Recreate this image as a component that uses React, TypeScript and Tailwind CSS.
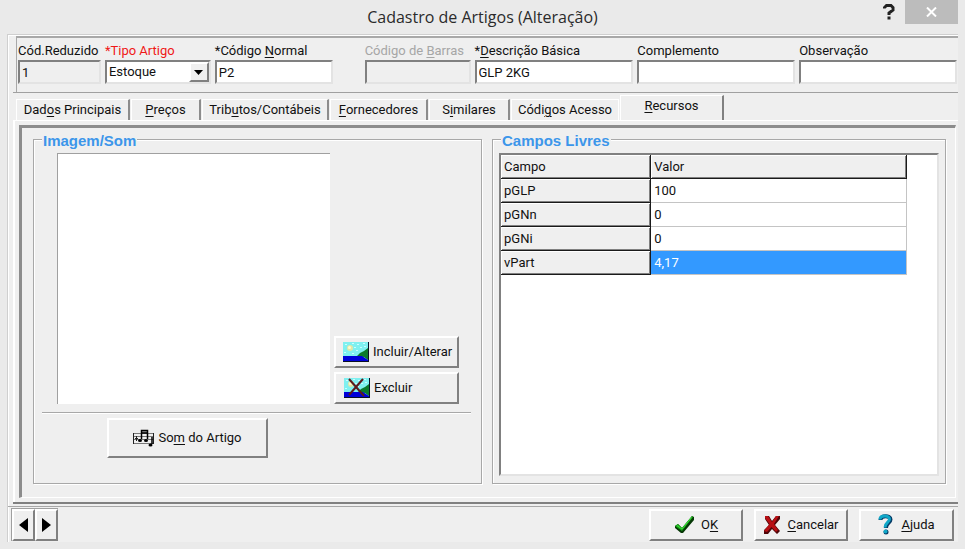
import { useState, type ReactNode } from "react"
import clsx from "clsx"

const FIELDS = [
    { id: "reduzido", label: "Cód.Reduzido", value: "1", size: "flex-[83]", readOnly: true },
    { id: "tipo", label: "*Tipo Artigo", value: "Estoque", size: "flex-[106]", select: true },
    { id: "normal", label: "*Código &Normal", value: "P2", size: "flex-[118]" },
    { id: "barras", label: "Código de &Barras", value: "", size: "flex-[106] ml-7", disabled: true },
    { id: "descricao", label: "*&Descrição Básica", value: "GLP 2KG", size: "flex-[159]" },
    { id: "complemento", label: "Complemento", value: "", size: "flex-[158]" },
    { id: "observacao", label: "Observação", value: "", size: "flex-[158]" },
]

const TABS = [
    { id: "dados", label: "Dad&os Principais", width: "min-w-[114px]" },
    { id: "precos", label: "&Preços", width: "min-w-[70px]" },
    { id: "tributos", label: "Trib&utos/Contábeis", width: "min-w-[127px]" },
    { id: "fornecedores", label: "&Fornecedores", width: "min-w-[98px]" },
    { id: "similares", label: "S&imilares", width: "min-w-[81px]" },
    { id: "codigos", label: "Códi&gos Acesso", width: "min-w-[108px]" },
    { id: "recursos", label: "&Recursos", width: "min-w-[104px]" },
]

const CAMPOS = [
    { campo: "pGLP", valor: "100" },
    { campo: "pGNn", valor: "0" },
    { campo: "pGNi", valor: "0" },
    { campo: "vPart", valor: "4,17" },
]

// "&" marks the access key, which is underlined
function Caption({ text }: { text: string }) {
    const at = text.indexOf("&")
    if (at < 0) return <span>{text}</span>
    return (
        <span className="whitespace-pre">
            {text.slice(0, at)}
            <u className="underline-offset-2">{text[at + 1]}</u>
            {text.slice(at + 2)}
        </span>
    )
}

function RaisedButton({ children, className, label }: { children: ReactNode; className?: string; label?: string }) {
    return (
        <button
            type="button"
            aria-label={label}
            className={clsx(
                "flex items-center border-2 border-t-white border-l-white border-r-[#808080] border-b-[#808080] bg-[#efefef] whitespace-nowrap active:border-t-[#808080] active:border-l-[#808080] active:border-r-white active:border-b-white",
                className
            )}
        >
            {children}
        </button>
    )
}

function PictureIcon({ crossed }: { crossed?: boolean }) {
    return (
        <svg width="26" height="20" viewBox="0 0 26 20" className="shrink-0">
            <rect width="26" height="20" fill="#0a1024" />
            <rect width="25" height="19" fill="#7ff0f0" />
            <path d="M2 2.500h2M9 1.500h2M14 2.500h2M20 1.500h2M1 10.500h2M9 11.500h2M13 8.500h2M17 5.500h2M11 5.500h2M21 4.500h2" stroke="#c8ffff" />
            <circle cx="7" cy="6" r="3" fill="#e0e8a8" />
            <circle cx="6.500" cy="5.500" r="1.500" fill="#fffbd0" />
            <path d="M14 14 L17 11 L21 9 L25 6 V18 L21 15 Z" fill="#0b7a2c" />
            <path d="M0 14 H19 L25 18 V19 H0 Z" fill="#0000d8" />
            {crossed && <path d="M5 1 L20 18 M19 1 L5 17" stroke="#5c1a1c" strokeWidth="2" />}
        </svg>
    )
}

function MusicIcon() {
    return (
        <svg width="21" height="18" viewBox="0 0 21 18" className="shrink-0">
            <path d="M0 4.500H20M0 7.500H20M0 10.500H20M0 14.500H20" stroke="#777" />
            <path d="M.5 4V15M20.500 4V15" stroke="#222" />
            <path d="M3.500 7V12M2 9.500H5" stroke="#222" />
            <path d="M8 1H15V4H8Z" fill="#999" />
            <path d="M8.500 10V1.500H14.500V10M8.500 4H14.500M19 8V15" fill="none" stroke="#000" strokeWidth="1.500" />
            <ellipse cx="7" cy="11.500" rx="2" ry="1.500" />
            <ellipse cx="13" cy="11.500" rx="2" ry="1.500" />
            <ellipse cx="17.500" cy="16" rx="2" ry="1.500" />
        </svg>
    )
}

function CheckIcon() {
    return (
        <svg width="21" height="20" viewBox="0 0 21 20" className="shrink-0">
            <path d="M1 11 L4 9 L8 13 L18 1 L20 2 V5 L9 18 H7 L1 13 Z" fill="#063806" />
            <path d="M1 11 L4 9 L8 13 L18 1 L19 2 L8 16 Z" fill="#18a818" />
            <path d="M3 10.500 L8 14 L17.500 2.500" fill="none" stroke="#3ce03c" />
        </svg>
    )
}

function CrossIcon() {
    return (
        <svg width="18" height="19" viewBox="0 0 18 19" className="shrink-0">
            <path d="M2 1 H6 L9 6 L13 1 H17 V4 L12 10 L17 16 L14 19 L9 14 L5 19 H1 V15 L6 10 L2 4 Z" fill="#4d0508" />
            <path d="M2 1 H5 L9 7 L13 1 H16 L11 9 L15 15 L13 17 L8.500 12 L4 17 L1 16 L6.500 9 L2 3 Z" fill="#b80f14" />
        </svg>
    )
}

function HelpIcon() {
    return (
        <svg width="15" height="21" viewBox="0 0 15 21" className="shrink-0">
            <path d="M2.500 6 C2.500 1 12.500 1 12.500 5.500 C12.500 9 8 9 8 14" fill="none" stroke="#063a66" strokeWidth="4" />
            <path d="M2 5.500 C2 1 11.500 1 11.500 5 C11.500 8.500 7 8.500 7 13.500" fill="none" stroke="#10a8c8" strokeWidth="3" />
            <circle cx="8" cy="18" r="2.500" fill="#063a66" />
            <circle cx="7.500" cy="17.500" r="2" fill="#10a8c8" />
        </svg>
    )
}

function TitleBar() {
    return (
        <header className="grid h-[34px] grid-cols-[1fr_auto_1fr] items-start pr-[7px] pl-[7px]">
            <h1 className="col-start-2 font-['Open_Sans',sans-serif] text-base leading-[34px] text-[#2b2b2b]">
                Cadastro de Artigos (Alteração)
            </h1>
            <div className="flex justify-end gap-1">
                <button type="button" aria-label="Ajuda da janela" className="flex h-6 w-6 items-center justify-center">
                    <svg width="12" height="16" viewBox="0 0 12 16">
                        <path d="M1.500 4.500 V3.500 L3.500 1.500 H8 L10 3.500 V6 L6 9 V11" fill="none" stroke="#222" strokeWidth="3" />
                        <rect x="4.500" y="12.500" width="3" height="3" fill="#222" />
                    </svg>
                </button>
                <button type="button" aria-label="Fechar" className="flex h-6 w-[53px] items-center justify-center bg-[#bcbcbc]">
                    <svg width="11" height="10" viewBox="0 0 11 10">
                        <path d="M1 .5 L10 9.500 M10 .5 L1 9.500" stroke="#fff" strokeWidth="2" />
                    </svg>
                </button>
            </div>
        </header>
    )
}

function FieldRow() {
    return (
        <section className="ml-2 flex gap-1 border-t-2 border-l border-[#a8a8a8] pt-1 pr-px pb-2 pl-px">
            {FIELDS.map((f) => (
                <div key={f.id} className={clsx("flex min-w-0 flex-col", f.size)}>
                    <label
                        htmlFor={f.id}
                        className={clsx(
                            "leading-[18px] whitespace-nowrap",
                            f.select && "text-[#f01818]",
                            f.disabled && "text-[#a6a6a6]"
                        )}
                    >
                        <Caption text={f.label} />
                    </label>
                    {f.select ? (
                        <div className="relative">
                            <select
                                id={f.id}
                                defaultValue={f.value}
                                className="h-6 w-full appearance-none border-2 border-t-[#808080] border-r-[#e3e3e3] border-b-[#e3e3e3] border-l-[#808080] bg-white pl-[2px]"
                            >
                                <option>Estoque</option>
                                <option>Serviço</option>
                            </select>
                            <span className="pointer-events-none absolute top-[2px] right-[2px] flex h-5 w-5 items-center justify-center border-2 border-t-white border-r-[#808080] border-b-[#808080] border-l-white bg-[#efefef]">
                                <svg width="9" height="5" viewBox="0 0 9 5" className="shrink-0">
                                    <path d="M0 0H9L4.500 5Z" />
                                </svg>
                            </span>
                        </div>
                    ) : (
                        <input
                            id={f.id}
                            type="text"
                            defaultValue={f.value}
                            readOnly={f.readOnly}
                            disabled={f.disabled}
                            className={clsx(
                                "h-6 w-full border-2 border-t-[#808080] border-r-[#e3e3e3] border-b-[#e3e3e3] border-l-[#808080] pl-[2px] outline-none",
                                f.readOnly || f.disabled ? "bg-[#efefef]" : "bg-white"
                            )}
                        />
                    )}
                </div>
            ))}
        </section>
    )
}

function GroupBox({ title, className, children }: { title: string; className?: string; children: ReactNode }) {
    return (
        <fieldset
            className={clsx(
                "flex min-w-0 flex-col border border-[#a8a8a8] shadow-[1px_1px_0_#fff,inset_1px_1px_0_#fff]",
                className
            )}
        >
            <legend className="ml-2 bg-[#efefef] px-px pt-1 font-['Liberation_Sans',sans-serif] text-[15px] leading-4 font-bold text-[#3c96ea]">
                {title}
            </legend>
            {children}
        </fieldset>
    )
}

function ImagemSom() {
    return (
        <GroupBox title="Imagem/Som" className="flex-[449]">
            <div className="mt-1 flex flex-1 items-end gap-1 pr-[22px] pl-[23px]">
                <div className="flex-1 self-stretch border-t border-l border-[#a0a0a0] bg-white" />
                <div className="flex w-[125px] flex-col gap-1">
                    <RaisedButton className="h-8 gap-1 pl-[7px]">
                        <PictureIcon />
                        Incluir/Alterar
                    </RaisedButton>
                    <RaisedButton className="h-8 gap-1 pl-2">
                        <PictureIcon crossed />
                        Excluir
                    </RaisedButton>
                </div>
            </div>
            <hr className="mt-2 mr-[10px] ml-2 border-t border-b border-t-[#a8a8a8] border-b-white" />
            <RaisedButton className="mt-1 mb-[25px] ml-[73px] h-10 w-[161px] justify-center gap-1">
                <MusicIcon />
                <Caption text="So&m do Artigo" />
            </RaisedButton>
        </GroupBox>
    )
}

function CamposLivres() {
    const [selected, setSelected] = useState("vPart")
    const head = "h-6 border-r border-b border-[#1a1a1a] bg-[#efefef] px-[3px] text-left font-normal shadow-[inset_1px_1px_0_#fff,inset_-1px_-1px_0_#808080]"

    return (
        <GroupBox title="Campos Livres" className="flex-[454]">
            <div className="mx-[6px] mt-1 mb-[7px] flex-1 border-2 border-t-[#808080] border-r-[#e3e3e3] border-b-[#e3e3e3] border-l-[#808080] bg-white pr-[30px]">
                <table className="w-full table-fixed border-separate border-spacing-0">
                    <thead>
                        <tr>
                            <th scope="col" className={clsx(head, "w-[37%]")}>Campo</th>
                            <th scope="col" className={head}>Valor</th>
                        </tr>
                    </thead>
                    <tbody>
                        {CAMPOS.map((row) => (
                            <tr key={row.campo} onClick={() => setSelected(row.campo)}>
                                <th scope="row" className={head}>{row.campo}</th>
                                <td
                                    className={clsx(
                                        "h-6 border-r border-b border-[#c4c4c4] px-[3px]",
                                        row.campo === selected && "bg-[#3399ff] text-white"
                                    )}
                                >
                                    {row.valor}
                                </td>
                            </tr>
                        ))}
                    </tbody>
                </table>
            </div>
        </GroupBox>
    )
}

export default function App() {
    const [tab, setTab] = useState("recursos")

    return (
        <div className="flex min-h-screen flex-col bg-[#eaeaea] pb-[7px] font-[Roboto,sans-serif] text-[13px] leading-5 text-[#111]">
            <TitleBar />
            <main className="mx-[7px] flex flex-1 flex-col border-t border-l border-[#cfcfcf] bg-[#efefef] shadow-[inset_1px_1px_0_#fff]">
                <div className="mt-px">
                    <FieldRow />
                </div>

                <div className="ml-[5px] flex flex-1 flex-col border-t border-b-2 border-t-[#a0a0a0] border-b-[#808080]">
                    {/* Abas */}
                    <div role="tablist" className="flex items-end gap-px border-b border-white pt-[2px] pl-[3px]">
                        {TABS.map((t) => (
                            <button
                                key={t.id}
                                type="button"
                                role="tab"
                                aria-selected={t.id === tab}
                                onClick={() => setTab(t.id)}
                                className={clsx(
                                    "border-t border-l border-t-white border-l-white text-center whitespace-nowrap",
                                    t.width,
                                    t.id === tab ? "h-[25px] border-r-2 border-r-[#808080] pb-1" : "h-[21px]",
                                    t.id !== tab && t.id !== "codigos" && "border-r-2 border-r-[#8c8c8c]",
                                    t.id === "codigos" && "border-r border-r-white"
                                )}
                            >
                                <Caption text={t.label} />
                            </button>
                        ))}
                    </div>

                    <div className="flex flex-1 border-l-2 border-white pt-1 pr-[2px] pb-1 pl-1">
                        <div
                            role="tabpanel"
                            className="flex flex-1 gap-[10px] border-t-3 border-r border-b border-l-3 border-t-[#8c8c8c] border-r-white border-b-white border-l-[#8c8c8c] pt-px pr-[9px] pb-[13px] pl-[11px]"
                        >
                            {tab === "recursos" && (
                                <>
                                    <ImagemSom />
                                    <CamposLivres />
                                </>
                            )}
                        </div>
                    </div>
                </div>

                <footer className="mt-[2px] flex items-center justify-between border-t border-[#a8a8a8] pt-px pr-1 pb-px pl-[3px]">
                    <nav className="flex border-t border-l border-[#a0a0a0]">
                        <RaisedButton label="Anterior" className="h-8 w-[23px] justify-center">
                            <svg width="9" height="14" viewBox="0 0 9 14">
                                <path d="M9 0V14L0 7Z" />
                            </svg>
                        </RaisedButton>
                        <RaisedButton label="Próximo" className="h-8 w-[23px] justify-center">
                            <svg width="9" height="14" viewBox="0 0 9 14">
                                <path d="M0 0V14L9 7Z" />
                            </svg>
                        </RaisedButton>
                    </nav>
                    <div className="flex gap-[11px]">
                        <RaisedButton className="h-8 w-[94px] justify-center gap-[6px]">
                            <CheckIcon />
                            <Caption text="O&K" />
                        </RaisedButton>
                        <RaisedButton className="h-8 w-[94px] justify-center gap-[6px]">
                            <CrossIcon />
                            <Caption text="&Cancelar" />
                        </RaisedButton>
                        <RaisedButton className="h-8 w-[95px] justify-center gap-2">
                            <HelpIcon />
                            <Caption text="&Ajuda" />
                        </RaisedButton>
                    </div>
                </footer>
            </main>
        </div>
    )
}
